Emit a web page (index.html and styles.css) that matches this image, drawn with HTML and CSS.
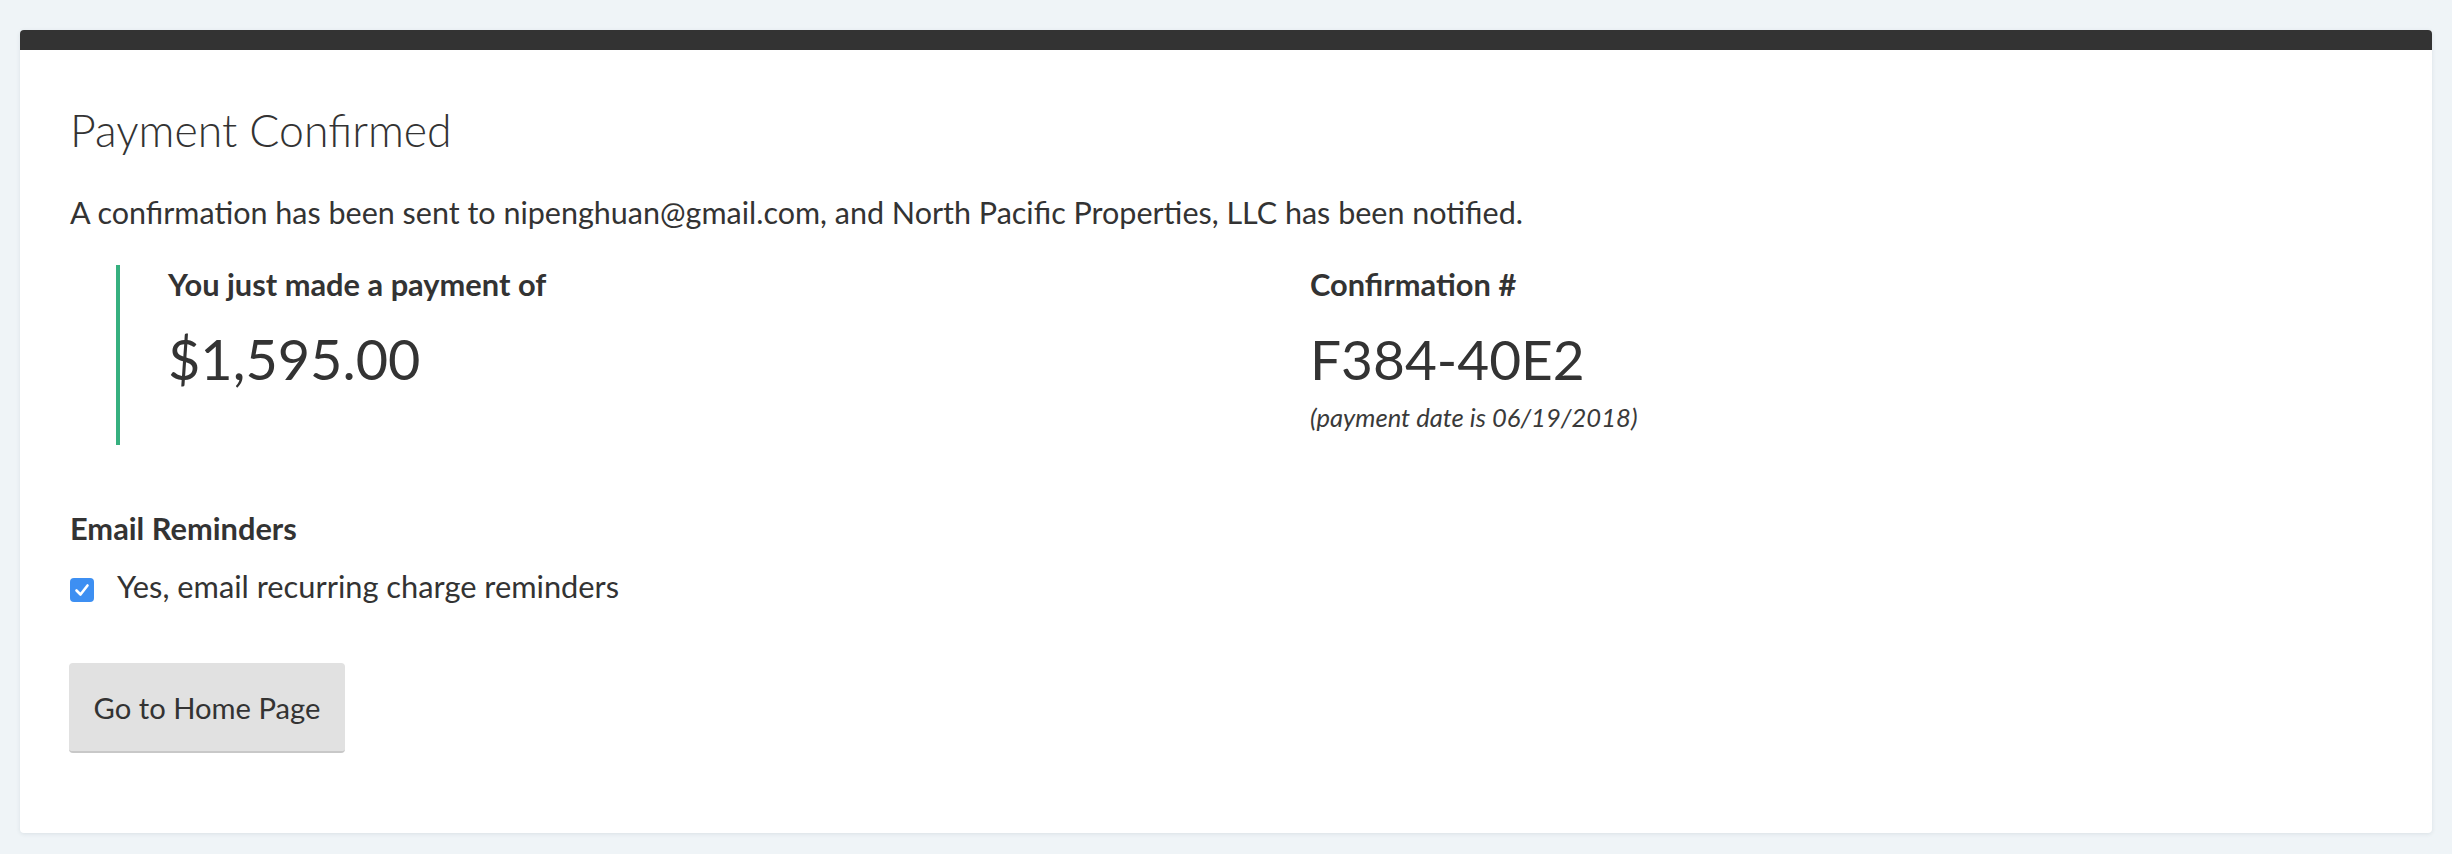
FILE: index.html
```html
<!DOCTYPE html>
<html lang="en">
<head>
<meta charset="utf-8">
<title>Payment Confirmed</title>
<link rel="stylesheet" href="styles.css">
</head>
<body>
<div class="card">
  <div class="card-bar"></div>
  <div class="card-body">
    <h3 class="title">Payment Confirmed</h3>
    <p class="lead-text">A confirmation has been sent to nipenghuan@gmail.com, and North Pacific Properties, LLC has been notified.</p>
    <div class="summary">
      <div class="summary-col">
        <div class="summary-label">You just made a payment of</div>
        <div class="summary-value amount">$1,595.00</div>
      </div>
      <div class="summary-col">
        <div class="summary-label">Confirmation #</div>
        <div class="summary-value">F384-40E2</div>
        <div class="summary-note">(payment date is 06/19/2018)</div>
      </div>
    </div>
    <div class="section-title">Email Reminders</div>
    <label class="check-row">
      <span class="checkbox"><svg viewBox="0 0 24 24" width="24" height="24"><path d="M6.5 12.5 L10.5 16.5 L17.5 7.5" fill="none" stroke="#fff" stroke-width="2.6" stroke-linecap="round" stroke-linejoin="round"/></svg></span>
      <span class="check-label">Yes, email recurring charge reminders</span>
    </label>
    <button class="btn" type="button">Go to Home Page</button>
  </div>
</div>
</body>
</html>
```
FILE: styles.css
```css
html, body {
  margin: 0;
  padding: 0;
}
body {
  background: #eff4f7;
  font-family: "Lato", "Liberation Sans", sans-serif;
  color: #333333;
  font-size: 30.5px;
  line-height: 1.2;
  padding-top: 30px;
  height: 854px;
  box-sizing: border-box;
}
.card {
  margin: 0 20px;
  background: #ffffff;
  border-radius: 4px;
  overflow: hidden;
  box-shadow: 0 1px 4px rgba(40, 60, 80, 0.10);
}
.card-bar {
  height: 20px;
  background: #333333;
}
.card-body {
  padding: 53px 50px 80px 50px;
}
.title {
  margin: 0 0 37px 0;
  font-size: 44.6px;
  font-weight: 300;
  line-height: 1.2;
}
.lead-text {
  margin: 0;
  font-size: 30.5px;
}
.summary {
  margin: 35px 0 0 46px;
  border-left: 4px solid #36b07f;
  padding: 1.6px 0 12.6px 48px;
  display: grid;
  grid-template-columns: 1fr 1fr;
  column-gap: 70px;
}
.summary-label {
  font-size: 30.8px;
  font-weight: 700;
}
.summary-value {
  margin-top: 22px;
  font-size: 55px;
  font-weight: 400;
}
.summary-value.amount {
  font-size: 55.8px;
}
.summary-note {
  margin-top: 10.3px;
  font-size: 25.6px;
  font-style: italic;
  font-weight: 400;
  color: #3a3a3a;
}
.section-title {
  margin-top: 65.6px;
  font-size: 30.8px;
  font-weight: 700;
}
.check-row {
  margin-top: 21px;
  display: flex;
  align-items: flex-start;
  gap: 23px;
  font-size: 30.8px;
}
.checkbox {
  margin-top: 9.5px;
  width: 24px;
  height: 24px;
  border-radius: 4px;
  background: #3d8ff2;
  display: flex;
  flex-shrink: 0;
}
.btn {
  display: block;
  margin-top: 57.4px;
  margin-left: -1px;
  width: 276px;
  padding: 27.2px 0 25.8px 0;
  border: none;
  border-bottom: 2px solid #c8c8c8;
  border-radius: 4px;
  background: #e1e1e1;
  color: #333333;
  font-family: "Lato", "Liberation Sans", sans-serif;
  font-size: 29.2px;
  line-height: 1.2;
  text-align: center;
}
```
